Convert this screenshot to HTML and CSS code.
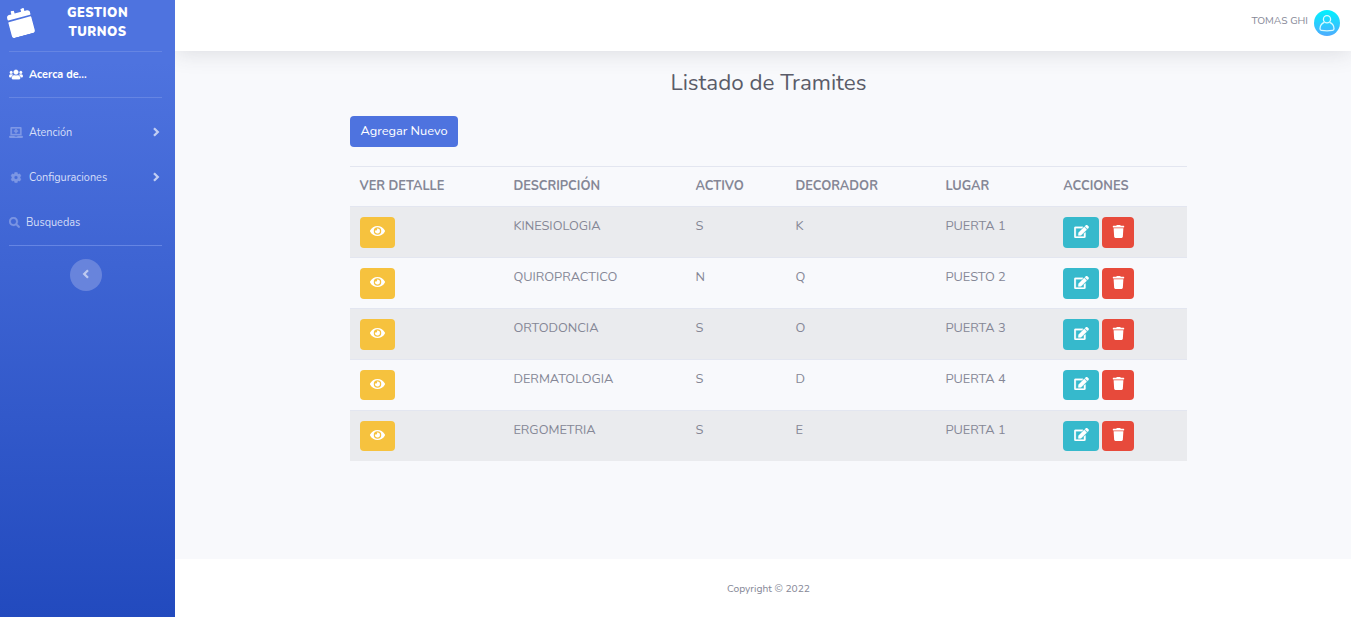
FILE: index.html
```html
<!DOCTYPE html>
<html lang="es">
<head>
<meta charset="utf-8">
<title>Gestion Turnos</title>
<link rel="stylesheet" href="styles.css">
</head>
<body>
<svg class="sprite" aria-hidden="true">
  <symbol id="calendar" viewBox="0 0 448 512"><path d="M12 192h424c6.600 0 12 5.400 12 12v260c0 26.500-21.500 48-48 48H48c-26.500 0-48-21.500-48-48V204c0-6.600 5.400-12 12-12zm436-44v-36c0-26.500-21.500-48-48-48h-48V12c0-6.600-5.400-12-12-12h-40c-6.600 0-12 5.400-12 12v52H160V12c0-6.600-5.400-12-12-12h-40c-6.600 0-12 5.400-12 12v52H48C21.500 64 0 85.500 0 112v36c0 6.600 5.400 12 12 12h424c6.600 0 12-5.400 12-12z"/></symbol>
  <symbol id="users" viewBox="0 0 640 512"><path d="M96 224c35.300 0 64-28.700 64-64s-28.700-64-64-64-64 28.700-64 64 28.700 64 64 64zm448 0c35.300 0 64-28.700 64-64s-28.700-64-64-64-64 28.700-64 64 28.700 64 64 64zm32 32h-64c-17.600 0-33.500 7.100-45.100 18.600 40.300 22.100 68.900 62 75.100 109.400h66c17.700 0 32-14.300 32-32v-32c0-35.300-28.700-64-64-64zm-256 0c61.900 0 112-50.100 112-112S381.900 32 320 32 208 82.100 208 144s50.100 112 112 112zm76.800 32h-8.300c-20.800 10-43.900 16-68.500 16s-47.600-6-68.500-16h-8.300C179.600 288 128 339.600 128 403.200V432c0 26.500 21.500 48 48 48h288c26.500 0 48-21.500 48-48v-28.800c0-63.600-51.600-115.200-115.200-115.200zm-223.700-13.400C161.500 263.100 145.600 256 128 256H64c-35.300 0-64 28.700-64 64v32c0 17.700 14.300 32 32 32h65.900c6.300-47.400 34.900-87.300 75.200-109.400z"/></symbol>
  <symbol id="laptop" viewBox="0 0 640 512"><path fill-rule="evenodd" d="M112 0h416c26 0 48 22 48 48v336H64V48C64 22 86 0 112 0zm16 64v256h384V64zM288 96h64v64h64v64h-64v64h-64v-64h-64v-64h64zM16 416h232c3 19 17 32 35 32h74c18 0 32-13 35-32h232c9 0 16 7 16 16v16c0 35-29 64-64 64H64c-35 0-64-29-64-64v-16c0-9 7-16 16-16z"/></symbol>
  <symbol id="cog" viewBox="0 0 512 512"><path d="M487.400 315.700l-42.600-24.600c4.300-23.200 4.300-47 0-70.200l42.600-24.600c4.900-2.800 7.100-8.600 5.500-14-11.100-35.600-30-67.800-54.700-94.600-3.800-4.100-10-5.100-14.800-2.300L380.800 110c-17.900-15.400-38.500-27.300-60.800-35.100V25.800c0-5.600-3.900-10.500-9.400-11.700-36.700-8.200-74.300-7.800-109.200 0-5.500 1.200-9.400 6.100-9.400 11.700V75c-22.200 7.900-42.800 19.800-60.800 35.100L88.700 85.500c-4.900-2.800-11-1.900-14.800 2.300-24.700 26.700-43.600 58.900-54.700 94.600-1.700 5.400.6 11.200 5.500 14L67.300 221c-4.300 23.200-4.300 47 0 70.200l-42.600 24.600c-4.900 2.800-7.100 8.600-5.500 14 11.100 35.600 30 67.800 54.700 94.600 3.800 4.100 10 5.100 14.800 2.300l42.600-24.600c17.900 15.400 38.500 27.300 60.800 35.100v49.200c0 5.600 3.900 10.500 9.400 11.700 36.700 8.200 74.300 7.800 109.200 0 5.500-1.200 9.400-6.100 9.400-11.700v-49.200c22.200-7.900 42.800-19.800 60.800-35.100l42.600 24.600c4.900 2.800 11 1.900 14.800-2.300 24.700-26.700 43.600-58.900 54.700-94.600 1.500-5.500-.7-11.300-5.600-14.100zM256 336c-44.100 0-80-35.900-80-80s35.900-80 80-80 80 35.900 80 80-35.900 80-80 80z"/></symbol>
  <symbol id="search" viewBox="0 0 512 512"><path d="M505 442.700L405.300 343c-4.500-4.500-10.600-7-17-7H372c27.600-35.300 44-79.700 44-128C416 93.100 322.900 0 208 0S0 93.100 0 208s93.100 208 208 208c48.300 0 92.700-16.400 128-44v16.300c0 6.400 2.500 12.500 7 17l99.700 99.700c9.400 9.400 24.600 9.400 33.900 0l28.300-28.300c9.400-9.400 9.400-24.600.1-34zM208 336c-70.700 0-128-57.200-128-128 0-70.700 57.200-128 128-128 70.700 0 128 57.200 128 128 0 70.700-57.200 128-128 128z"/></symbol>
  <symbol id="angle" viewBox="0 0 8 10"><path d="M2 1.200 5.800 5 2 8.800" fill="none" stroke="currentColor" stroke-width="2.300"/></symbol>
  <symbol id="eye" viewBox="0 0 576 512"><path d="M572.520 241.400C518.290 135.590 410.930 64 288 64S57.680 135.640 3.480 241.410a32.350 32.350 0 0 0 0 29.190C57.710 376.410 165.070 448 288 448s230.320-71.640 284.520-177.410a32.350 32.350 0 0 0 0-29.190zM288 400a144 144 0 1 1 144-144 143.930 143.930 0 0 1-144 144zm0-240a95.310 95.310 0 0 0-25.310 3.790 47.850 47.850 0 0 1-66.900 66.900A95.780 95.780 0 1 0 288 160z"/></symbol>
  <symbol id="edit" viewBox="0 0 576 512"><path d="M402.600 83.200l90.200 90.200c3.800 3.800 3.800 10 0 13.800L274.400 405.600l-92.800 10.300c-12.400 1.400-22.900-9.100-21.500-21.500l10.300-92.800L388.800 83.200c3.800-3.800 10-3.800 13.800 0zm162-22.900l-48.800-48.800c-15.200-15.200-39.900-15.200-55.200 0l-35.400 35.400c-3.800 3.800-3.800 10 0 13.800l90.200 90.200c3.800 3.800 10 3.800 13.800 0l35.400-35.400c15.200-15.300 15.200-40 0-55.200zM384 346.200V448H64V128h229.800c3.200 0 6.200-1.300 8.500-3.500l40-40c7.600-7.600 2.200-20.500-8.500-20.500H48C21.500 64 0 85.500 0 112v352c0 26.500 21.500 48 48 48h352c26.500 0 48-21.500 48-48V306.200c0-10.700-12.900-16-20.500-8.500l-40 40c-2.200 2.300-3.500 5.300-3.500 8.500z"/></symbol>
  <symbol id="trash" viewBox="0 0 448 512"><path d="M432 32H312l-9.400-18.700A24 24 0 0 0 281.100 0H166.800a23.720 23.720 0 0 0-21.400 13.300L136 32H16A16 16 0 0 0 0 48v32a16 16 0 0 0 16 16h416a16 16 0 0 0 16-16V48a16 16 0 0 0-16-16zM53.200 467a48 48 0 0 0 47.900 45h245.800a48 48 0 0 0 47.900-45L416 128H32z"/></symbol>
</svg>
<div class="wrapper">
  <nav class="sidebar">
    <a class="brand"><svg class="brand-icon"><use href="#calendar"/></svg><span class="brand-text">GESTION<br>TURNOS</span></a>
    <hr class="divider">
    <a class="nav-link active"><svg class="ico wide"><use href="#users"/></svg><span class="about">Acerca de...</span></a>
    <hr class="divider">
    <div class="nav-group">
      <a class="nav-link"><svg class="ico wide"><use href="#laptop"/></svg><span>Atención</span><svg class="caret"><use href="#angle"/></svg></a>
      <a class="nav-link"><svg class="ico wide"><use href="#cog"/></svg><span>Configuraciones</span><svg class="caret"><use href="#angle"/></svg></a>
      <a class="nav-link"><svg class="ico"><use href="#search"/></svg><span>Busquedas</span></a>
    </div>
    <hr class="divider">
    <button class="toggle"><svg class="caret flip"><use href="#angle"/></svg></button>
  </nav>
  <div class="content">
    <header class="topbar">
      <span class="user">TOMAS GHI</span>
      <svg class="avatar" viewBox="0 0 26 26">
        <defs><linearGradient id="sky" x1="0" y1="0" x2="0" y2="1"><stop offset="0" stop-color="#00f2fe"/><stop offset="1" stop-color="#4facfe"/></linearGradient></defs>
        <circle cx="13" cy="13" r="13" fill="url(#sky)"/>
        <g fill="none" stroke="#d9faff" stroke-width="1.300"><circle cx="13" cy="9.200" r="3.600"/><path d="M10.400 12.300C7.600 13.300 6 15.600 6 18.800c0 1 .5 1.500 1.400 1.600 3.600.5 7.600.5 11.200 0 .9-.1 1.400-.6 1.400-1.600 0-3.200-1.600-5.500-4.400-6.500"/></g>
      </svg>
    </header>
    <main class="main">
      <h1 class="title">Listado de Tramites</h1>
      <a class="btn btn-add">Agregar Nuevo</a>
      <table class="table">
        <colgroup><col class="c1"><col class="c2"><col class="c3"><col class="c4"><col class="c5"><col class="c6"></colgroup>
        <thead><tr><th>VER DETALLE</th><th>DESCRIPCIÓN</th><th>ACTIVO</th><th>DECORADOR</th><th>LUGAR</th><th>ACCIONES</th></tr></thead>
        <tbody>
          <tr><td><a class="btn view"><svg><use href="#eye"/></svg></a></td><td>KINESIOLOGIA</td><td>S</td><td>K</td><td>PUERTA 1</td><td><div class="actions"><a class="btn edit"><svg><use href="#edit"/></svg></a><a class="btn del"><svg><use href="#trash"/></svg></a></div></td></tr>
          <tr><td><a class="btn view"><svg><use href="#eye"/></svg></a></td><td>QUIROPRACTICO</td><td>N</td><td>Q</td><td>PUESTO 2</td><td><div class="actions"><a class="btn edit"><svg><use href="#edit"/></svg></a><a class="btn del"><svg><use href="#trash"/></svg></a></div></td></tr>
          <tr><td><a class="btn view"><svg><use href="#eye"/></svg></a></td><td>ORTODONCIA</td><td>S</td><td>O</td><td>PUERTA 3</td><td><div class="actions"><a class="btn edit"><svg><use href="#edit"/></svg></a><a class="btn del"><svg><use href="#trash"/></svg></a></div></td></tr>
          <tr><td><a class="btn view"><svg><use href="#eye"/></svg></a></td><td>DERMATOLOGIA</td><td>S</td><td>D</td><td>PUERTA 4</td><td><div class="actions"><a class="btn edit"><svg><use href="#edit"/></svg></a><a class="btn del"><svg><use href="#trash"/></svg></a></div></td></tr>
          <tr><td><a class="btn view"><svg><use href="#eye"/></svg></a></td><td>ERGOMETRIA</td><td>S</td><td>E</td><td>PUERTA 1</td><td><div class="actions"><a class="btn edit"><svg><use href="#edit"/></svg></a><a class="btn del"><svg><use href="#trash"/></svg></a></div></td></tr>
        </tbody>
      </table>
    </main>
    <footer class="footer">Copyright © 2022</footer>
  </div>
</div>
</body>
</html>
```
FILE: styles.css
```css
* { box-sizing: border-box; }
body { margin: 0; font-family: Nunito, Lato, "Liberation Sans", sans-serif; font-size: 12.8px; line-height: 19.2px; color: #858796; }
svg { fill: currentColor; display: block; }
.sprite { width: 0; height: 0; position: absolute; }
.wrapper { display: flex; height: 617px; overflow: hidden; }

.sidebar { position: relative; z-index: 1; width: 175px; flex: none; background: linear-gradient(180deg, #4e73df 10%, #224abe 100%); color: #fff; }
.brand { display: flex; align-items: center; height: 51px; padding: 0 0 7px 8px; }
.brand-icon { width: 25px; height: 27px; transform: rotate(-15deg); flex: none; }
.brand-text { width: 129px; padding-top: 2px; text-align: center; font-size: 12.8px; font-weight: 900; letter-spacing: .5px; line-height: 19px; }
.divider { border: 0; height: 1px; margin: 0 13px 0 9px; background: #6585e3; }
.nav-link { display: flex; align-items: center; height: 45px; padding: 0 15px 0 9px; font-size: 10.88px; color: #d7dff8; }
.nav-link span { padding-left: 6px; }
.nav-link.active { color: #fff; font-weight: 700; }
.ico { width: 11px; height: 11px; flex: none; opacity: .38; stroke: currentColor; stroke-width: 14px; overflow: visible; }
.wide { width: 14px; }
.active .ico { opacity: 1; }
.caret { width: 8px; height: 10px; margin: 0 0 1px auto; flex: none; opacity: .85; }
.nav-group { padding: 12px 0 0; }
.toggle { display: flex; align-items: center; justify-content: center; width: 32px; height: 32px; margin: 13px 0 0 70px; padding: 0; border: 0; border-radius: 50%; background: #6884dc; color: #cdd6f4; }
.flip { transform: scaleX(-1); margin: 0 1px 2px 0; }

.content { flex: 1; display: flex; flex-direction: column; background: #f8f9fc; }
.topbar { height: 51px; flex: none; background: #fff; display: flex; align-items: center; justify-content: flex-end; gap: 6px; padding: 0 11px 6px 0; box-shadow: 0 2px 22px rgba(58, 59, 69, .15); }
.user { font-size: 10.24px; padding-bottom: 1px; }
.avatar { width: 26px; height: 26px; }
.main { flex: 1; width: 837px; margin: 0 0 0 175px; }
.title { margin: 18px 0 20px; font-size: 22.4px; line-height: 27px; font-weight: 400; color: #5a5c69; text-align: center; }
.btn { display: flex; justify-content: center; height: 31px; border-radius: 4px; color: #fff; }
.btn-add { width: 108px; background: #4e73df; line-height: 30px; }
.table { width: 837px; margin-top: 19px; table-layout: fixed; border-collapse: separate; border-spacing: 0; }
.c1 { width: 153.400px; } .c2 { width: 182px; } .c3 { width: 100px; } .c4 { width: 150px; } .c5 { width: 117.900px; }
th, td { padding: 10px 0 0 10px; text-align: left; vertical-align: top; border-top: 1px solid #e3e6f0; }
th { height: 40px; font-weight: 700; }
th:first-child { padding-left: 9.600px; }
td { height: 51px; }
tbody tr:nth-child(odd) { background: #eaebee; }
.table .btn { padding-top: 8px; }
.table tr:nth-child(n+4) .btn { height: 30px; }
.table svg { width: 15px; height: 13px; stroke: currentColor; stroke-width: 12px; overflow: visible; }
.view { width: 35px; background: #f6c23e; }
.edit { width: 36px; background: #36b9cc; }
.table .view, .table tr:nth-child(n+4) .btn { padding-top: 7px; }
.table .view svg { height: 14px; stroke: none; }
.table .del svg { stroke: none; }
.del { width: 32px; background: #e74a3b; }
.actions { display: flex; gap: 3px; }
.footer { height: 58px; flex: none; padding-left: 11px; background: #fff; text-align: center; font-size: 10.24px; line-height: 60px; }
```
